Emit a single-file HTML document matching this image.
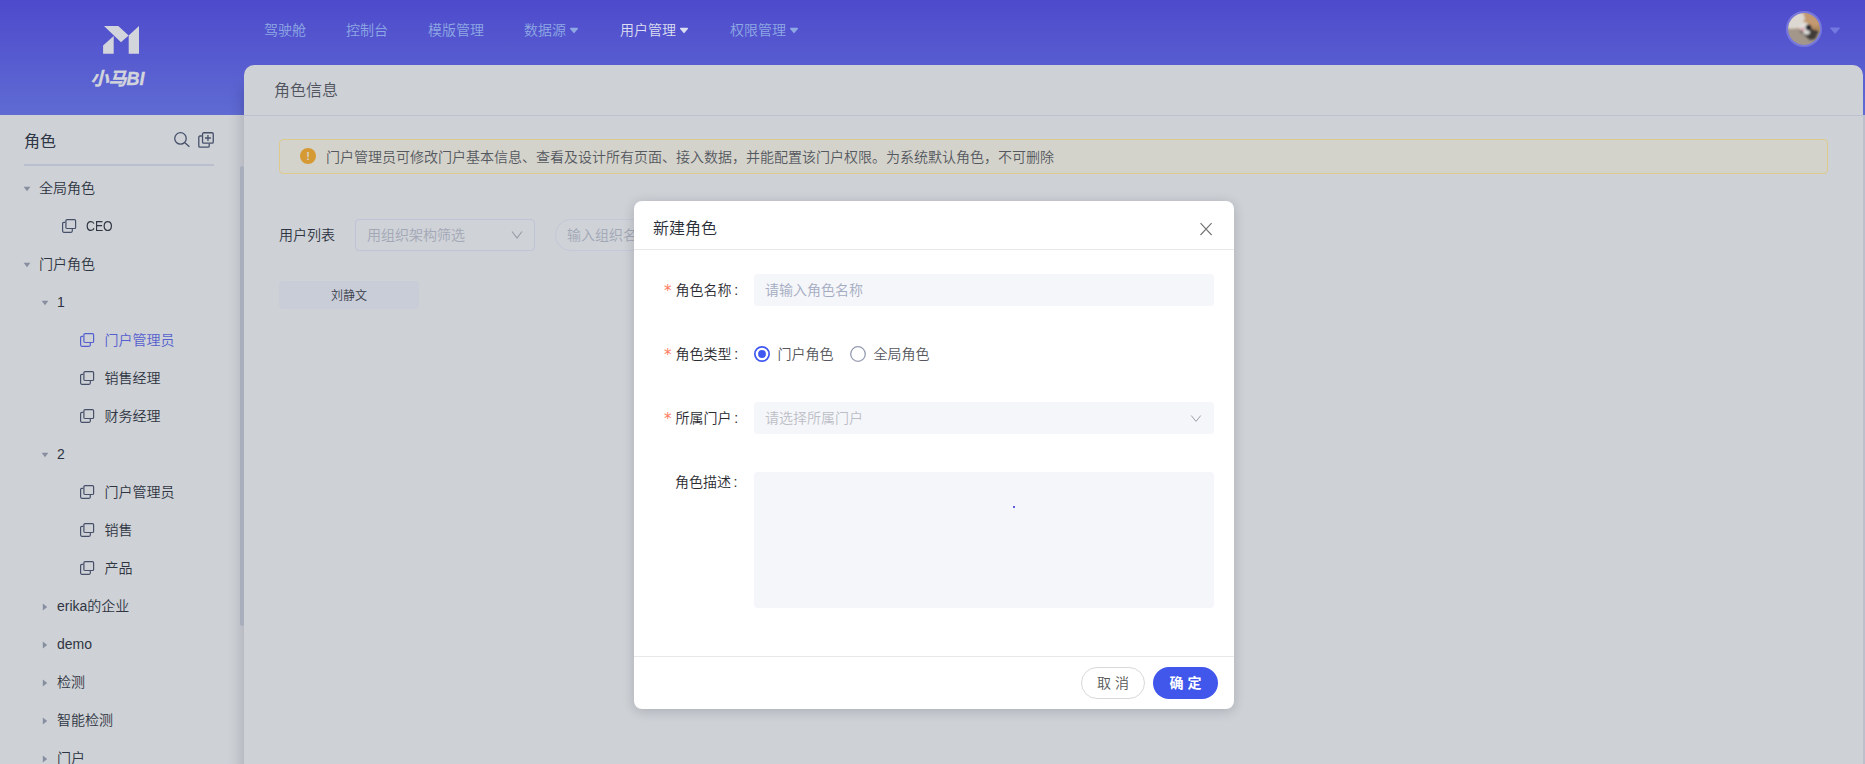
<!DOCTYPE html>
<html lang="zh-CN">
<head>
<meta charset="utf-8">
<title>小马BI - 角色</title>
<style>
*{box-sizing:border-box;margin:0;padding:0}
html,body{width:1865px;height:764px;overflow:hidden}
body{position:relative;font-weight:350;font-family:"Liberation Sans","Noto Sans CJK SC",sans-serif;font-size:14px;color:#2f3542;background:#ced1d6}
.abs{position:absolute}
/* top gradient */
#top{position:absolute;left:0;top:0;width:1865px;height:115px;background:linear-gradient(180deg,#4e4acc 0%,#5f6bd3 100%)}
/* logo */
#logo{position:absolute;left:0;top:0;width:244px;height:115px}
#logo svg{position:absolute;left:0;top:0}
#brand{position:absolute;left:0;width:235px;-webkit-text-stroke:0.35px #d3d5dc;top:68px;text-align:center;font-size:18px;line-height:22px;font-weight:bold;font-style:italic;color:#d3d5dc;letter-spacing:0}
/* nav */
.nav{position:absolute;top:0;height:60px;line-height:60px;font-size:14px;color:#8ea9e3;white-space:nowrap}
.nav.on{color:#dcdff0}
.caret{display:inline-block;margin-left:3px;vertical-align:middle;position:relative;top:-0.6px}
/* avatar */
#avatar{position:absolute;left:1786px;top:11px;width:36px;height:36px;border-radius:50%;background:#7877dc}

/* sidebar */
#side{position:absolute;left:0;top:115px;width:244px;height:649px;background:#ced1d6;overflow:hidden}
#side .shadow{position:absolute;right:0;top:0;width:17px;height:100%;background:linear-gradient(90deg,rgba(70,75,90,0) 0%,rgba(70,75,90,.045) 45%,rgba(70,75,90,.16) 100%)}
#side h3{position:absolute;left:24px;top:14.5px;font-size:16px;line-height:24px;font-weight:normal;color:#2f3646}
#side .hr{position:absolute;left:24px;top:49px;width:190px;height:2px;background:#b9bfcc}
.ti{position:absolute;height:22px;line-height:22px;font-size:14px;color:#2f3542;white-space:nowrap}
.ti.on{color:#5560cf}
.tc{position:absolute;width:0;height:0}
.tc.d{border-left:3.5px solid transparent;border-right:3.5px solid transparent;border-top:4.5px solid #8f98ab}
.tc.r{border-top:3.5px solid transparent;border-bottom:3.5px solid transparent;border-left:4.5px solid #8f98ab}
.ic{position:absolute;width:15px;height:15px}
.ti em{font-style:normal;display:inline-block;transform:scaleX(.88);transform-origin:0 50%}
#sbar{position:absolute;left:240px;top:51px;width:4px;height:459.5px;border-radius:2px;background:#a9aebc}
/* main */
#panel{position:absolute;left:244px;top:65px;width:1619px;height:51px;background:#ced1d6;border-radius:10px 10px 0 0;border-bottom:1px solid #bcc0d0}
#panel span{position:absolute;left:30px;top:14px;font-size:16px;line-height:24px;color:#50545f}
#alert{position:absolute;left:279px;top:139px;width:1549px;height:35px;border:1px solid #dccb8d;border-radius:4px;background:#d4d3cb}
#alert .i{position:absolute;left:20px;top:8px;width:16px;height:16px;border-radius:50%;background:#d69a35;color:#d4d3cb;font-size:11px;font-weight:bold;line-height:16px;text-align:center}
#alert span{position:absolute;left:46px;top:6px;font-size:14px;line-height:22px;color:#54585f;white-space:nowrap}
#ul{position:absolute;left:279px;top:224px;font-size:14px;line-height:22px;color:#2f3542}
#sel{position:absolute;left:355px;top:219px;width:180px;height:32px;border:1px solid #bec3d6;border-radius:4px;background:#cfd2d7}
#sel span{position:absolute;left:11px;top:4px;font-size:14px;line-height:22px;color:#a2a7b6}
#srch{position:absolute;left:555px;top:219px;width:200px;height:32px;border:1px solid #c4c8d8;border-radius:16px;background:#cfd2d7}
#srch span{position:absolute;left:11px;top:4px;font-size:14px;line-height:22px;color:#a2a7b6;white-space:nowrap}
#tag{position:absolute;left:279px;top:281px;width:140px;height:28px;border-radius:4px;background:#c9cdd8;font-size:12px;line-height:30px;text-align:center;color:#3a3f4b}
/* modal */
#modal{position:absolute;left:634px;top:201px;width:600px;height:508px;background:#fff;border-radius:8px;box-shadow:0 2px 12px rgba(15,18,25,.19)}
#modal .t{position:absolute;left:19px;top:15.6px;font-size:16px;line-height:24px;color:#2a2e38}
#modal .hl{position:absolute;left:0;top:48px;width:600px;height:1px;background:#e8e8ea}
#modal .fl{position:absolute;left:0;top:455px;width:600px;height:1px;background:#e8e8ea}
.lb{position:absolute;font-size:14px;line-height:22px;color:#2a2b30;white-space:nowrap}
.lb b{position:absolute;left:0;top:1px;color:#ff7a5c;font-weight:normal;font-family:"DejaVu Sans","Liberation Sans",sans-serif;font-size:15px}
.lb u{text-decoration:none;margin-left:2.6px;font-family:"Liberation Sans",sans-serif}
.inp{position:absolute;left:120px;width:460px;background:#f5f6fa;border-radius:4px}
.inp span{position:absolute;left:11px;top:5px;font-size:14px;line-height:22px;color:#a4abc1}
.rd{position:absolute;width:16px;height:16px;border-radius:50%;border:1px solid #9aa0b3;background:#fff}
.rd.on{border:1.6px solid #4058f0}
.rd.on:after{content:"";position:absolute;left:2.6px;top:2.6px;width:7.6px;height:7.6px;border-radius:50%;background:#4058f0}
.rl{position:absolute;font-size:14px;line-height:22px;color:#56575d}
.btn{position:absolute;top:466px;height:32px;border-radius:16px;font-size:14px;line-height:30px;text-align:center}
#cancel{left:447px;width:64px;border:1px solid #d9d9d9;color:#585858;background:#fff}
#ok{left:519px;width:65px;background:#4157ec;color:#fff;font-weight:700;line-height:32px}
</style>
</head>
<body>
<div id="top"></div>
<div id="logo">
<svg width="244" height="115" viewBox="0 0 244 115"><g fill="#d3d5dc"><polygon points="104,26 118.3,26 128.6,35.6 121,42.2"/><polygon points="139,26 139,53.8 128.7,53.8 128.7,35.5"/><polygon points="113.7,36 113.7,53.8 103.1,53.8 103.1,45.5"/></g></svg>
<div id="brand">小马BI</div>
</div>
<div class="nav" style="left:264px">驾驶舱</div>
<div class="nav" style="left:346px">控制台</div>
<div class="nav" style="left:428px">模版管理</div>
<div class="nav" style="left:524px">数据源<svg class="caret" width="10" height="7" viewBox="0 0 10 7"><path d="M1.7,1.5H8.3L5,5.4Z" fill="currentColor" stroke="currentColor" stroke-width="1.4" stroke-linejoin="round"/></svg></div>
<div class="nav on" style="left:620px">用户管理<svg class="caret" width="10" height="7" viewBox="0 0 10 7"><path d="M1.7,1.5H8.3L5,5.4Z" fill="currentColor" stroke="currentColor" stroke-width="1.4" stroke-linejoin="round"/></svg></div>
<div class="nav" style="left:730px">权限管理<svg class="caret" width="10" height="7" viewBox="0 0 10 7"><path d="M1.7,1.5H8.3L5,5.4Z" fill="currentColor" stroke="currentColor" stroke-width="1.4" stroke-linejoin="round"/></svg></div>
<div id="avatar"><svg width="32" height="32" viewBox="0 0 32 32" style="position:absolute;left:2px;top:2px;border-radius:50%">
<defs><filter id="bl" x="-20%" y="-20%" width="140%" height="140%"><feGaussianBlur stdDeviation="0.9"/></filter><clipPath id="cc"><circle cx="16" cy="16" r="16"/></clipPath></defs>
<g clip-path="url(#cc)"><rect width="32" height="32" fill="#a2978a"/>
<g filter="url(#bl)">
<path d="M-2,-2H34V13L28,18 20,17 10,16 -2,15Z" fill="#c2996f"/>
<path d="M-2,2L8,-2 15,0 17,5 15,10 12,15 2,16 -2,14Z" fill="#dcd7d0"/>
<path d="M24,14L33,12 33,20 26,19Z" fill="#b08a62"/>
<path d="M11,17L24,16 31,18 27,26 22,27 15,21Z" fill="#3f3b38"/>
<ellipse cx="16.5" cy="14" rx="5" ry="4.6" fill="#e2e0dd"/>
<ellipse cx="18.5" cy="19.3" rx="3.4" ry="2.4" fill="#dad8d6"/>
<ellipse cx="20.6" cy="14.4" rx="3" ry="2.9" fill="#23262e"/>
<ellipse cx="14.8" cy="16.3" rx="1.3" ry="1.9" fill="#d58c98" transform="rotate(-25 14.8 16.3)"/>
<path d="M-2,18L10,18 16,24 22,28 30,26 34,22 34,34 -2,34Z" fill="#a69b8c" opacity=".0"/>
</g></g></svg></div>
<svg class="abs" style="left:1829px;top:26.6px" width="12" height="8" viewBox="0 0 12 8"><path d="M1.4,0.9H10.6L6,6.6Z" fill="#7379e0" stroke="#7379e0" stroke-width="0.8" stroke-linejoin="round"/></svg>

<div class="abs" style="left:226px;top:65px;width:30px;height:50px;overflow:hidden"><div style="position:absolute;left:18px;top:24px;width:40px;height:70px;box-shadow:-1px 0 12px rgba(25,25,70,.27)"></div></div>
<div id="panel"><span>角色信息</span></div>

<div id="side">
<div class="shadow"></div>
<h3>角色</h3>
<div class="hr"></div>
<svg class="abs" style="left:174px;top:17px" width="16" height="16" viewBox="0 0 16 16" fill="none" stroke="#46506a" stroke-width="1.3"><circle cx="6.5" cy="6.45" r="5.75"/><path d="M10.9,10.7L15.4,14.7"/></svg>
<svg class="abs" style="left:198px;top:17px" width="16" height="16" viewBox="0 0 16 16" fill="none" stroke="#46506a" stroke-width="1.3"><rect x="4.55" y="0.75" width="10.7" height="10.4" rx="1.2"/><path d="M3.9,4H2a1.2,1.2 0 0 0-1.2,1.2V14a1.2,1.2 0 0 0 1.2,1.2H10a1.2,1.2 0 0 0 1.2-1.2V11.8"/><path d="M7,6H12.9M9.95,3.05V8.95"/></svg>
<svg class="abs" style="left:23.0px;top:71.1px" width="8" height="6" viewBox="0 0 8 6"><path d="M0.6,0.8H7.4L4,5.2Z" fill="#878ea0"/></svg>
<div class="ti" style="left:39px;top:62px">全局角色</div>
<svg class="ic" style="left:62px;top:104px" width="15" height="15" viewBox="0 0 15 15" fill="none" stroke="#46506a" stroke-width="1.2"><rect x="3.9" y="0.6" width="9.7" height="8.9" rx="1.1"/><path d="M3.3,3.4H1.8a1.2,1.2 0 0 0-1.2,1.2V12.1a1.2,1.2 0 0 0 1.2,1.2H9.1a1.2,1.2 0 0 0 1.2-1.2V10.1"/></svg>
<div class="ti" style="left:86.4px;top:100px"><em>CEO</em></div>
<svg class="abs" style="left:23.0px;top:147.1px" width="8" height="6" viewBox="0 0 8 6"><path d="M0.6,0.8H7.4L4,5.2Z" fill="#878ea0"/></svg>
<div class="ti" style="left:39px;top:138px">门户角色</div>
<svg class="abs" style="left:41.0px;top:185.1px" width="8" height="6" viewBox="0 0 8 6"><path d="M0.6,0.8H7.4L4,5.2Z" fill="#878ea0"/></svg>
<div class="ti" style="left:57px;top:176px">1</div>
<svg class="ic" style="left:80px;top:218px" width="15" height="15" viewBox="0 0 15 15" fill="none" stroke="#5560cf" stroke-width="1.2"><rect x="3.9" y="0.6" width="9.7" height="8.9" rx="1.1"/><path d="M3.3,3.4H1.8a1.2,1.2 0 0 0-1.2,1.2V12.1a1.2,1.2 0 0 0 1.2,1.2H9.1a1.2,1.2 0 0 0 1.2-1.2V10.1"/></svg>
<div class="ti on" style="left:104.4px;top:214px">门户管理员</div>
<svg class="ic" style="left:80px;top:256px" width="15" height="15" viewBox="0 0 15 15" fill="none" stroke="#46506a" stroke-width="1.2"><rect x="3.9" y="0.6" width="9.7" height="8.9" rx="1.1"/><path d="M3.3,3.4H1.8a1.2,1.2 0 0 0-1.2,1.2V12.1a1.2,1.2 0 0 0 1.2,1.2H9.1a1.2,1.2 0 0 0 1.2-1.2V10.1"/></svg>
<div class="ti" style="left:104.4px;top:252px">销售经理</div>
<svg class="ic" style="left:80px;top:294px" width="15" height="15" viewBox="0 0 15 15" fill="none" stroke="#46506a" stroke-width="1.2"><rect x="3.9" y="0.6" width="9.7" height="8.9" rx="1.1"/><path d="M3.3,3.4H1.8a1.2,1.2 0 0 0-1.2,1.2V12.1a1.2,1.2 0 0 0 1.2,1.2H9.1a1.2,1.2 0 0 0 1.2-1.2V10.1"/></svg>
<div class="ti" style="left:104.4px;top:290px">财务经理</div>
<svg class="abs" style="left:41.0px;top:337.1px" width="8" height="6" viewBox="0 0 8 6"><path d="M0.6,0.8H7.4L4,5.2Z" fill="#878ea0"/></svg>
<div class="ti" style="left:57px;top:328px">2</div>
<svg class="ic" style="left:80px;top:370px" width="15" height="15" viewBox="0 0 15 15" fill="none" stroke="#46506a" stroke-width="1.2"><rect x="3.9" y="0.6" width="9.7" height="8.9" rx="1.1"/><path d="M3.3,3.4H1.8a1.2,1.2 0 0 0-1.2,1.2V12.1a1.2,1.2 0 0 0 1.2,1.2H9.1a1.2,1.2 0 0 0 1.2-1.2V10.1"/></svg>
<div class="ti" style="left:104.4px;top:366px">门户管理员</div>
<svg class="ic" style="left:80px;top:408px" width="15" height="15" viewBox="0 0 15 15" fill="none" stroke="#46506a" stroke-width="1.2"><rect x="3.9" y="0.6" width="9.7" height="8.9" rx="1.1"/><path d="M3.3,3.4H1.8a1.2,1.2 0 0 0-1.2,1.2V12.1a1.2,1.2 0 0 0 1.2,1.2H9.1a1.2,1.2 0 0 0 1.2-1.2V10.1"/></svg>
<div class="ti" style="left:104.4px;top:404px">销售</div>
<svg class="ic" style="left:80px;top:446px" width="15" height="15" viewBox="0 0 15 15" fill="none" stroke="#46506a" stroke-width="1.2"><rect x="3.9" y="0.6" width="9.7" height="8.9" rx="1.1"/><path d="M3.3,3.4H1.8a1.2,1.2 0 0 0-1.2,1.2V12.1a1.2,1.2 0 0 0 1.2,1.2H9.1a1.2,1.2 0 0 0 1.2-1.2V10.1"/></svg>
<div class="ti" style="left:104.4px;top:442px">产品</div>
<svg class="abs" style="left:42.0px;top:488.1px" width="6" height="8" viewBox="0 0 6 8"><path d="M0.8,0.5V7.5L5.2,4Z" fill="#878ea0"/></svg>
<div class="ti" style="left:57px;top:480px">erika的企业</div>
<svg class="abs" style="left:42.0px;top:526.1px" width="6" height="8" viewBox="0 0 6 8"><path d="M0.8,0.5V7.5L5.2,4Z" fill="#878ea0"/></svg>
<div class="ti" style="left:57px;top:518px">demo</div>
<svg class="abs" style="left:42.0px;top:564.1px" width="6" height="8" viewBox="0 0 6 8"><path d="M0.8,0.5V7.5L5.2,4Z" fill="#878ea0"/></svg>
<div class="ti" style="left:57px;top:556px">检测</div>
<svg class="abs" style="left:42.0px;top:602.1px" width="6" height="8" viewBox="0 0 6 8"><path d="M0.8,0.5V7.5L5.2,4Z" fill="#878ea0"/></svg>
<div class="ti" style="left:57px;top:594px">智能检测</div>
<svg class="abs" style="left:42.0px;top:640.1px" width="6" height="8" viewBox="0 0 6 8"><path d="M0.8,0.5V7.5L5.2,4Z" fill="#878ea0"/></svg>
<div class="ti" style="left:57px;top:632px">门户</div>
<div id="sbar"></div>
</div>

<div class="abs" style="left:1863px;top:115px;width:2px;height:649px;background:#bcc0cc"></div>
<div id="alert"><div class="i">!</div><span>门户管理员可修改门户基本信息、查看及设计所有页面、接入数据，并能配置该门户权限。为系统默认角色，不可删除</span></div>
<div id="ul">用户列表</div>
<div id="sel"><span>用组织架构筛选</span><svg class="abs" style="left:155px;top:10px" width="12" height="9" viewBox="0 0 12 9" fill="none" stroke="#989ba3" stroke-width="1.1"><path d="M1,1.5L6,8 11,1.5"/></svg></div>
<div id="srch"><span>输入组织名称搜索</span></div>
<div id="tag">刘静文</div>

<div id="modal">
<div class="t">新建角色</div>
<svg class="abs" style="left:565px;top:21px" width="14" height="14" viewBox="0 0 14 14" fill="none" stroke="#757575" stroke-width="1.15"><path d="M1.5,1.2L12.6,13M12.6,1.2L1.5,13"/></svg>
<div class="hl"></div>
<div class="lb" style="left:30px;top:78px"><b>*</b><span style="margin-left:11.6px">角色名称</span><u>:</u></div>
<div class="inp" style="top:73px;height:32px"><span>请输入角色名称</span></div>
<div class="lb" style="left:30px;top:142px"><b>*</b><span style="margin-left:11.6px">角色类型</span><u>:</u></div>
<svg class="abs" style="left:120px;top:145px" width="16" height="16" viewBox="0 0 16 16"><circle cx="8" cy="8" r="7.15" fill="#fff" stroke="#4058f0" stroke-width="1.7"/><circle cx="8" cy="8" r="3.9" fill="#4058f0"/></svg><div class="rl" style="left:143.5px;top:142px">门户角色</div>
<svg class="abs" style="left:216px;top:145px" width="16" height="16" viewBox="0 0 16 16"><circle cx="8" cy="8" r="7.3" fill="#fff" stroke="#969cb0" stroke-width="1.3"/></svg><div class="rl" style="left:239.5px;top:142px">全局角色</div>
<div class="lb" style="left:30px;top:206px"><b>*</b><span style="margin-left:11.6px">所属门户</span><u>:</u></div>
<div class="inp" style="top:201px;height:32px"><span style="color:#bcbec6">请选择所属门户</span><svg class="abs" style="left:436px;top:12px" width="12" height="9" viewBox="0 0 12 9" fill="none" stroke="#9d9fa6" stroke-width="1"><path d="M1.2,1.5L6,7.4 10.8,1.5"/></svg></div>
<div class="lb" style="left:41px;top:270px">角色描述<u>:</u></div>
<div class="inp" style="top:271px;height:136px"></div>
<i class="abs" style="left:378.5px;top:304.5px;width:2px;height:2px;border-radius:50%;background:#2a2ad0"></i>
<div class="fl"></div>
<div class="btn" id="cancel">取 消</div>
<div class="btn" id="ok">确 定</div>
</div>
</body>
</html>
